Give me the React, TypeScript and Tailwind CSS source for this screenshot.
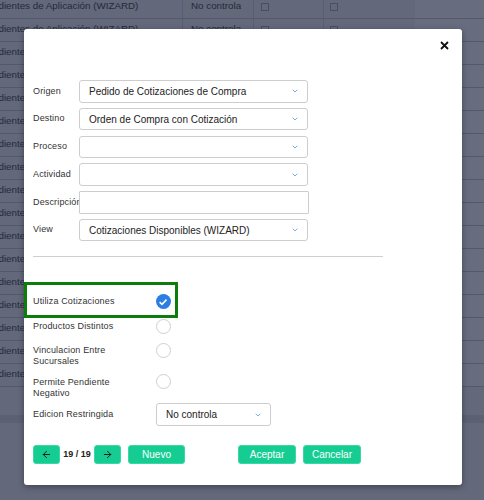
import { ArrowLeft, ArrowRight, ChevronDown } from "lucide-react";

const rows = Array.from({ length: 17 });

function Select({ value, wide }: { value?: string; wide?: boolean }) {
  return (
    <div
      className={`flex h-[22.5px] items-center justify-between rounded-[3px] border border-[#cdcdcd] bg-white pl-[9px] pr-[8px] text-[10px] text-[#222] ${
        wide ? "w-[229px]" : "w-[115px]"
      }`}
    >
      <span className="whitespace-nowrap">{value}</span>
      <ChevronDown size={8} strokeWidth={2.2} className="text-[#4f8ae0]" />
    </div>
  );
}

function Radio({ checked }: { checked?: boolean }) {
  if (checked)
    return (
      <span className="flex h-[15px] w-[15px] shrink-0 items-center justify-center rounded-full bg-[#2b7fe3]">
        <svg width="10" height="10" viewBox="0 0 10 10">
          <path d="M1.6 5.2 4 7.4 8.5 2.6" fill="none" stroke="#fff" strokeWidth="1.6" />
        </svg>
      </span>
    );
  return <span className="h-[15px] w-[15px] shrink-0 rounded-full border border-[#cfcfcf] bg-white" />;
}

export default function App() {
  return (
    <div className="relative h-[500px] w-[484px] overflow-hidden bg-[#63687b] font-['Liberation_Sans',Arial,sans-serif]">
      {/* table behind the overlay */}
      <div className="-mt-[4.5px] flex flex-col">
        {rows.map((_, i) => (
          <div key={i} className="flex h-[23px] border-b border-[#53586a] text-[9.8px] text-[#262a38]">
            <div className="flex w-[183px] items-center overflow-hidden whitespace-nowrap border-r border-[#595e70]">
              <span className="-ml-[19px]">Pendientes de Aplicación (WIZARD)</span>
            </div>
            <div className="flex w-[71px] items-center border-r border-[#595e70] pl-[8px]">No controla</div>
            <div className="flex w-[70px] items-center border-r border-[#595e70] pl-[7px]">
              <span className="h-[8px] w-[8px] border border-[#4a4e5e]" />
            </div>
            <div className="flex w-[53px] items-center pl-[6px]">
              <span className="h-[8px] w-[8px] border border-[#4a4e5e]" />
            </div>
            <div className="ml-[38px] flex-1 bg-[#676c7f]" />
          </div>
        ))}
        <div className="h-[28px]" />
        <div className="h-[8px] bg-[#5b6073]" />
      </div>

      {/* modal */}
      <div className="absolute left-[24px] top-[29px] h-[456px] w-[438px] rounded-[3px] bg-white pl-[9px] pt-[51px] shadow-[0_2px_6px_rgba(0,0,0,0.35)]">
        <button className="absolute right-[13px] top-[12px] flex h-[9px] w-[9px] items-center justify-center">
          <svg width="9" height="9" viewBox="0 0 9 9">
            <path d="M1 1 8 8M8 1 1 8" stroke="#111" strokeWidth="1.8" />
          </svg>
        </button>

        <div className="flex flex-col gap-[5.3px]">
          {[
            ["Origen", "Pedido de Cotizaciones de Compra"],
            ["Destino", "Orden de Compra con Cotización"],
            ["Proceso", ""],
            ["Actividad", ""],
          ].map(([label, value]) => (
            <div key={label} className="flex items-center">
              <span className="w-[46px] overflow-hidden whitespace-nowrap text-[9px] tracking-[0.15px] text-[#333]">{label}</span>
              <Select value={value} wide />
            </div>
          ))}
          <div className="flex items-center">
            <span className="w-[46px] overflow-hidden whitespace-nowrap text-[9px] tracking-[0.15px] text-[#333]">Descripción</span>
            <div className="h-[22.5px] w-[230px] rounded-[1px] border border-[#cdcdcd]" />
          </div>
          <div className="flex items-center">
            <span className="w-[46px] overflow-hidden whitespace-nowrap text-[9px] tracking-[0.15px] text-[#333]">View</span>
            <Select value="Cotizaciones Disponibles (WIZARD)" wide />
          </div>
        </div>

        <div className="mt-[15px] w-[350px] border-t border-[#cfcfcf]" />

        <div className="-ml-[9px] mt-[25px] flex h-[36px] w-[154px] items-center border-[3px] border-[#0b7d0b] pl-[6px] pt-[3px]">
          <span className="w-[122.5px] text-[9px] tracking-[0.15px] text-[#333]">Utiliza Cotizaciones</span>
          <Radio checked />
        </div>

        <div className="mt-[1px] flex h-[15px] items-center">
          <span className="w-[122.5px] text-[9px] tracking-[0.15px] text-[#333]">Productos Distintos</span>
          <Radio />
        </div>

        <div className="mt-[8.5px] flex items-start">
          <span className="mt-[2px] w-[122.5px] text-[9px] leading-[11px] tracking-[0.15px] text-[#333]">
            Vinculacion Entre
            <br />
            Sucursales
          </span>
          <Radio />
        </div>

        <div className="mt-[7.5px] flex items-start">
          <span className="mt-[2.5px] w-[122.5px] text-[9px] leading-[11px] tracking-[0.15px] text-[#333]">
            Permite Pendiente
            <br />
            Negativo
          </span>
          <Radio />
        </div>

        <div className="mt-[4.5px] flex items-center">
          <span className="w-[123px] text-[9px] tracking-[0.15px] text-[#333]">Edicion Restringida</span>
          <Select value="No controla" />
        </div>

        <div className="mt-[19px] flex h-[19px] items-center text-[10px] text-white">
          <button className="flex h-full w-[27px] items-center justify-center rounded-[3px] border border-[#3ad8a3] bg-[#15cd92]">
            <ArrowLeft size={11} strokeWidth={2} className="text-[#111]" />
          </button>
          <span className="mx-[3px] w-[28px] text-center text-[9px] font-semibold text-[#222]">19 / 19</span>
          <button className="flex h-full w-[27px] items-center justify-center rounded-[3px] border border-[#3ad8a3] bg-[#15cd92]">
            <ArrowRight size={11} strokeWidth={2} className="text-[#111]" />
          </button>
          <button className="ml-[7px] h-full w-[57px] rounded-[3px] border border-[#3ad8a3] bg-[#15cd92]">Nuevo</button>
          <button className="ml-[53px] h-full w-[58px] rounded-[3px] border border-[#3ad8a3] bg-[#15cd92]">Aceptar</button>
          <button className="ml-[7px] h-full w-[58px] rounded-[3px] border border-[#3ad8a3] bg-[#15cd92]">Cancelar</button>
        </div>
      </div>
    </div>
  );
}
